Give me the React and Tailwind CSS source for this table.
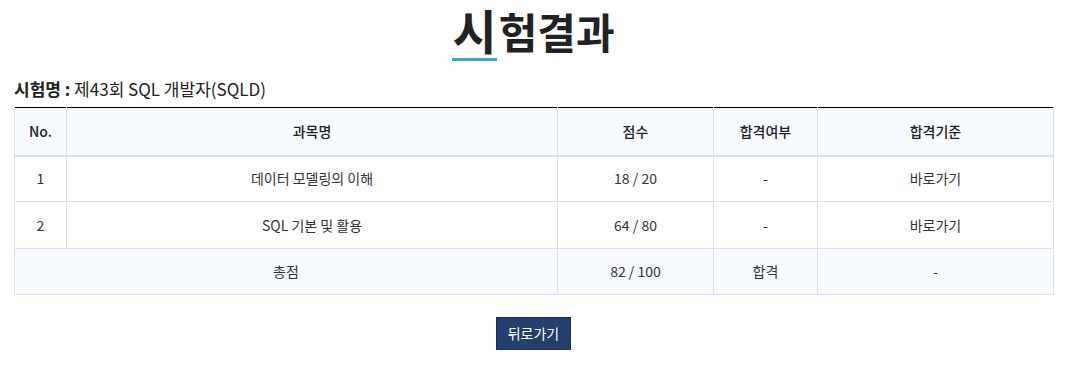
const font = { fontFamily: '"Noto Sans CJK KR", "Noto Sans", sans-serif' };

const subjects = [
  { no: 1, name: "데이터 모델링의 이해", score: "18 / 20", pass: "-", link: "바로가기", h: "h-[46px]" },
  { no: 2, name: "SQL 기본 및 활용", score: "64 / 80", pass: "-", link: "바로가기", h: "h-[47px]" },
];

const App = () => {
  return (
    <div className="h-[368px] w-[1078px] bg-white text-[#333]" style={font}>
      <div className="ml-[14px] w-[1039px]">
        <h1 className="flex h-[62px] items-start justify-center text-[#222]">
          <span className="inline-block border-b-[3px] border-[#3aa0db] text-[48px] leading-[58px] font-bold">시</span>
          <span className="ml-[2px] text-[42px] leading-[62px] font-semibold">험결과</span>
        </h1>

        <p className="mt-[13px] text-[17px] leading-[28px] text-[#222]">
          <span className="font-bold">시험명 :</span> 제43회 SQL 개발자(SQLD)
        </p>

        <table className="mt-[4px] w-full table-fixed border-collapse border-t border-t-black text-[14px]">
          <colgroup>
            <col className="w-[52px]" />
            <col className="w-[491px]" />
            <col className="w-[156px]" />
            <col className="w-[104px]" />
            <col className="w-[236px]" />
          </colgroup>
          <thead>
            <tr className="h-[48px] border-b-2 border-[#dde1e6] bg-[#f7faff] text-[#222]">
              <th className="border-x border-[#dde1e6] font-medium">No.</th>
              <th className="border-x border-[#dde1e6] font-medium">과목명</th>
              <th className="border-x border-[#dde1e6] font-medium">점수</th>
              <th className="border-x border-[#dde1e6] font-medium">합격여부</th>
              <th className="border-x border-[#dde1e6] font-medium">합격기준</th>
            </tr>
          </thead>
          <tbody>
            {subjects.map((s) => (
              <tr key={s.no} className={`${s.h} border-b border-[#dde1e6] text-center`}>
                <td className="border-x border-[#dde1e6]">{s.no}</td>
                <td className="border-x border-[#dde1e6]">{s.name}</td>
                <td className="border-x border-[#dde1e6]">{s.score}</td>
                <td className="border-x border-[#dde1e6]">{s.pass}</td>
                <td className="border-x border-[#dde1e6]">{s.link}</td>
              </tr>
            ))}
            <tr className="h-[46px] border-b border-[#dde1e6] bg-[#f7faff] text-center">
              <td colSpan={2} className="border-x border-[#dde1e6]">총점</td>
              <td className="border-x border-[#dde1e6]">82 / 100</td>
              <td className="border-x border-[#dde1e6]">합격</td>
              <td className="border-x border-[#dde1e6]">-</td>
            </tr>
          </tbody>
        </table>

        <div className="mt-[22px] flex justify-center">
          <button className="h-[33px] w-[75px] border border-[#17305a] bg-[#233f6c] text-[14px] text-white">뒤로가기</button>
        </div>
      </div>
    </div>
  );
};

export default App;
